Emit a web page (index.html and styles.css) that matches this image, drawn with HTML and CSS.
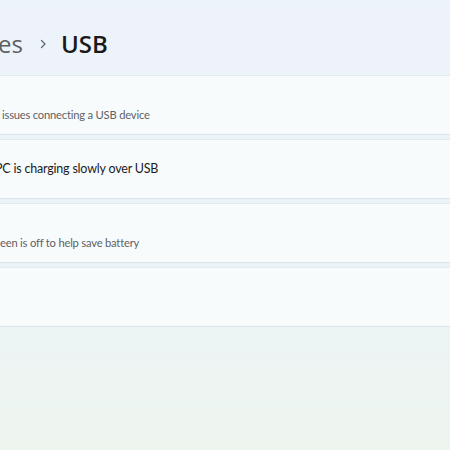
FILE: index.html
```html
<!DOCTYPE html>
<html lang="en">
<head>
  <meta charset="UTF-8" />
  <meta name="viewport" content="width=device-width, initial-scale=1.0" />
  <title>USB</title>
  <link rel="stylesheet" href="styles.css">
</head>
<body>
  <main class="page">
    <h1 class="crumbs">
      <span class="crumb-parent">Bluetooth &amp; devices</span>
      <svg class="chevron" width="8" height="12" viewBox="0 0 8 12" aria-hidden="true">
        <path d="M2.5 2.5l3.5 3.5-3.5 3.5" fill="none" stroke="#5f6a72" stroke-width="1.3" stroke-linecap="round" stroke-linejoin="round"/>
      </svg>
      <span class="crumb-current">USB</span>
    </h1>

    <section class="cards">
      <div class="card">
        <div class="text">
          <p class="line title"><span class="cut">Connection notifications</span></p>
          <p class="line desc cut-1"><span class="cut">Show a notification if there are&nbsp;</span>issues connecting a USB device</p>
        </div>
      </div>
      <div class="card">
        <div class="text">
          <p class="line title cut-2"><span class="cut">Show a notification if this&nbsp;</span>PC is charging slowly over USB</p>
        </div>
      </div>
      <div class="card">
        <div class="text">
          <p class="line title"><span class="cut">USB battery saver</span></p>
          <p class="line desc cut-3"><span class="cut">Stop USB devices from using battery when the scr</span>een is off to help save battery</p>
        </div>
      </div>
      <div class="card"></div>
    </section>
  </main>
</body>
</html>
```

FILE: styles.css
```css
html, body {
  height: 100%;
}
body {
  margin: 0;
  overflow: hidden;
  font-family: Lato, "Open Sans", sans-serif;
  background: linear-gradient(180deg, #edf3fa 0%, #ecf3f7 60%, #edf5ef 100%);
  color: #1b1b1b;
}
.page {
  padding-top: 27px;
}
.crumbs {
  display: flex;
  align-items: center;
  margin: 0 0 14px 0;
  height: 34px;
  font-family: "Open Sans", sans-serif;
  font-size: 24px;
  font-weight: 600;
  line-height: 34px;
}
.crumb-parent {
  display: flex;
  justify-content: flex-end;
  width: 23px;
  overflow: hidden;
  white-space: nowrap;
  color: #5b5f63;
  font-weight: 500;
}
.chevron {
  margin: 0 14px 0 16px;
}
.crumb-current {
  color: #1a1a1a;
}
.cards {
  display: flex;
  flex-direction: column;
  gap: 4px;
  margin-right: -20px;
}
.card {
  height: 58px;
  display: flex;
  align-items: center;
  background: #f8fbfc;
  border: 1px solid #e3ebee;
  border-bottom-color: #dbe4e8;
  border-left: none;
  border-radius: 0 4px 4px 0;
}
.text {
  display: flex;
  flex-direction: column;
}
.line {
  display: flex;
  margin: 0 0 0 -80px;
  white-space: nowrap;
  letter-spacing: -0.2px;
}
.cut {
  display: flex;
  justify-content: flex-end;
  width: 80px;
  overflow: hidden;
}
.title {
  font-size: 12.5px;
  line-height: 20px;
  color: #1c1c1c;
}
.desc {
  font-size: 11.2px;
  line-height: 16px;
  color: #5e6266;
}
.cut-1 .cut {
  width: 82px;
}
.cut-2 .cut {
  width: 75px;
}
.cut-3 .cut {
  width: 80px;
}
```
